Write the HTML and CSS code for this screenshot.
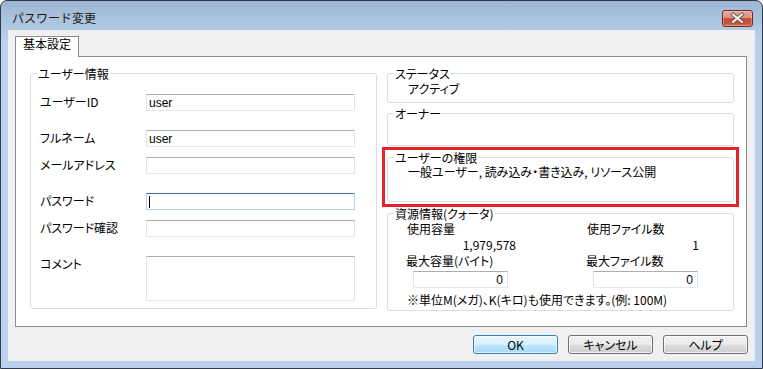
FILE: index.html
```html
<!DOCTYPE html>
<html lang="ja">
<head>
<meta charset="utf-8">
<title>パスワード変更</title>
<link rel="stylesheet" href="styles.css">
</head>
<body>
<div class="window">
  <div class="titlebar">
    <div class="title">パスワード変更</div>
    <div class="close">
      <svg width="29" height="15" viewBox="0 0 29 15">
        <path d="M10 3.5 L19 11 M19 3.5 L10 11" stroke="#6b4a46" stroke-width="3.6" stroke-linecap="square" fill="none"/>
        <path d="M10 3.5 L19 11 M19 3.5 L10 11" stroke="#f2f2f2" stroke-width="2" stroke-linecap="square" fill="none"/>
      </svg>
    </div>
  </div>
  <div class="frame">
    <div class="client">
      <div class="tabs">
        <div class="tab">基本設定</div>
      </div>
      <div class="page">
        <fieldset class="group user-group">
          <legend>ユーザー情報</legend>
          <div class="form">
            <div class="row"><span class="label">ユーザーID</span><div class="box"><span class="val">user</span></div></div>
            <div class="row wide"><span class="label">フルネーム</span><div class="box"><span class="val">user</span></div></div>
            <div class="row"><span class="label">メールアドレス</span><div class="box"></div></div>
            <div class="row wide"><span class="label">パスワード</span><div class="box focused"><span class="caret"></span></div></div>
            <div class="row"><span class="label">パスワード確認</span><div class="box"></div></div>
            <div class="row wide"><span class="label">コメント</span><div class="box memo"></div></div>
          </div>
        </fieldset>
        <div class="right">
          <fieldset class="group status">
            <legend>ステータス</legend>
            <div class="gtext">アクティブ</div>
          </fieldset>
          <fieldset class="group owner">
            <legend>オーナー</legend>
          </fieldset>
          <div class="marked">
            <fieldset class="group rights">
              <legend>ユーザーの権限</legend>
              <div class="gtext">一般ユーザー, 読み込み・書き込み, リソース公開</div>
            </fieldset>
            <div class="highlight"></div>
          </div>
          <fieldset class="group quota">
            <legend>資源情報(クォータ)</legend>
            <div class="quota-grid">
              <div class="qcol">
                <span class="qlabel">使用容量</span>
                <span class="qvalue v1">1,979,578</span>
                <span class="qlabel2">最大容量(バイト)</span>
                <div class="box num n1"><span class="val">0</span></div>
              </div>
              <div class="qcol">
                <span class="qlabel">使用ファイル数</span>
                <span class="qvalue v2">1</span>
                <span class="qlabel2">最大ファイル数</span>
                <div class="box num n2"><span class="val">0</span></div>
              </div>
            </div>
            <div class="note">※単位M(メガ)、K(キロ)も使用できます。(例: 100M)</div>
          </fieldset>
        </div>
      </div>
      <div class="buttons">
        <div class="btn default">OK</div>
        <div class="btn">キャンセル</div>
        <div class="btn">ヘルプ</div>
      </div>
    </div>
  </div>
</div>
</body>
</html>
```

FILE: styles.css
```css
* { box-sizing: border-box; }
html, body { margin: 0; padding: 0; }
body {
  width: 763px;
  height: 369px;
  overflow: hidden;
  background: #ffffff;
  font-family: "Noto Sans CJK JP", sans-serif;
  font-size: 12px;
  line-height: 14px;
  color: #000;
  font-feature-settings: "palt";
}
.window {
  width: 763px;
  height: 369px;
  border: 1px solid #2f3b48;
  border-radius: 7px 7px 0 0;
  background: linear-gradient(to bottom, #9cb6d3 0px, #b2cae4 28px, #b9d1ea 40px, #b9d1ea 100%);
  display: flex;
  flex-direction: column;
  overflow: hidden;
}
.titlebar {
  flex: none;
  height: 29px;
  display: flex;
  justify-content: space-between;
  align-items: flex-start;
}
.title {
  padding: 10px 0 0 11px;
  font-feature-settings: normal;
  color: #1a1a1a;
}
.close {
  margin: 9px 9px 0 0;
  width: 31px;
  height: 17px;
  border: 1px solid #6c2b22;
  border-radius: 3px;
  background: linear-gradient(to bottom, #e6ab9b 0%, #da907e 45%, #c9503a 50%, #c6503a 80%, #d4735a 100%);
  display: flex;
  box-shadow: inset 0 0 0 1px rgba(255, 220, 210, 0.35);
}
.close svg { display: block; }
.frame {
  flex: 1;
  display: flex;
  padding: 0 7px 7px 7px;
}
.client {
  flex: 1;
  background: #f0f0f0;
  display: flex;
  flex-direction: column;
  padding: 6px 0 0 7px;
}
.tabs {
  height: 20px;
  display: flex;
}
.tab {
  width: 64px;
  height: 21px;
  padding: 0 0 0 7px;
  border: 1px solid #898c95;
  border-bottom: none;
  background: #ffffff;
  position: relative;
  z-index: 1;
}
.page {
  width: 732px;
  height: 271px;
  border: 1px solid #898c95;
  background: #ffffff;
  padding: 10px 12px 0 14px;
  display: grid;
  grid-template-columns: 347px 347px;
  column-gap: 10px;
  align-items: start;
}
.group {
  margin: 0;
  padding: 0;
  min-width: 0;
  border: 1px solid #d5dfe5;
  border-radius: 3px;
}
.group legend {
  padding: 0 1px;
  margin-left: 6px;
  line-height: 13px;
  height: 13px;
}
.user-group { height: 242px; }
.form {
  padding: 14px 0 0 9px;
  display: flex;
  flex-direction: column;
}
.row {
  display: flex;
  align-items: flex-start;
  margin-top: 10px;
}
.row:first-child { margin-top: 0; }
.row.wide { margin-top: 19px; }
.label {
  width: 106px;
  padding-top: 1px;
  flex: none;
}
.box {
  width: 209px;
  height: 17px;
  background: #fff;
  border: 1px solid #e2e3ea;
  border-top-color: #abadb3;
  border-bottom-color: #e3e9ef;
  display: flex;
  align-items: center;
  padding-left: 2px;
}
.box.memo { height: 45px; }
.box.focused {
  border-color: #b5cfe7;
  border-top-color: #3d7bad;
}
.caret {
  width: 1px;
  height: 12px;
  background: #000;
  margin-left: 0;
}
.val {
  font-family: "Liberation Sans", Arial, sans-serif;
  font-size: 12px;
  line-height: 14px;
}
.right {
  display: flex;
  flex-direction: column;
}
.status { height: 36px; }
.owner { height: 39px; margin-top: 4px; }
.marked {
  position: relative;
  margin-top: 5px;
}
.rights { height: 51px; }
.highlight {
  position: absolute;
  left: -5px;
  right: -5px;
  top: -4px;
  bottom: -5px;
  border: 3px solid #e8202a;
}
.gtext {
  padding: 2px 0 0 20px;
}
.rights .gtext { padding-top: 1px; }
.quota { height: 104px; margin-top: 5px; }
.quota-grid {
  display: grid;
  grid-template-columns: 180px 1fr;
  padding: 2px 0 0 18px;
}
.qcol {
  display: flex;
  flex-direction: column;
  align-items: flex-start;
}
.qlabel { margin-left: 1px; }
.qvalue {
  margin-top: 2px;
  text-align: right;
  font-feature-settings: normal;
}
.v1 { width: 110px; }
.v2 { width: 113px; }
.qlabel2 { margin-top: 2px; }
.box.num {
  margin-top: 3px;
  margin-left: 7px;
  justify-content: flex-end;
  padding: 0 4px 0 0;
}
.n1 { width: 95px; }
.n2 { width: 105px; }
.note {
  padding: 5px 0 0 19px;
}
.buttons {
  margin-top: 8px;
  display: flex;
  justify-content: flex-end;
  gap: 10px;
  padding-right: 7px;
}
.btn {
  width: 85px;
  height: 19px;
  border: 1px solid #707070;
  border-radius: 3px;
  background: linear-gradient(to bottom, #f2f2f2 0%, #ebebeb 50%, #dddddd 51%, #cfcfcf 100%);
  box-shadow: inset 0 0 0 1px rgba(255, 255, 255, 0.7);
  display: flex;
  align-items: center;
  justify-content: center;
}
.btn.default {
  border-color: #3c7fb1;
  background: linear-gradient(to bottom, #eaf6fd 0%, #d9f0fc 50%, #bee6fd 51%, #a7d9f5 100%);
  box-shadow: inset 0 0 0 1px rgba(255, 255, 255, 0.6);
}
```
